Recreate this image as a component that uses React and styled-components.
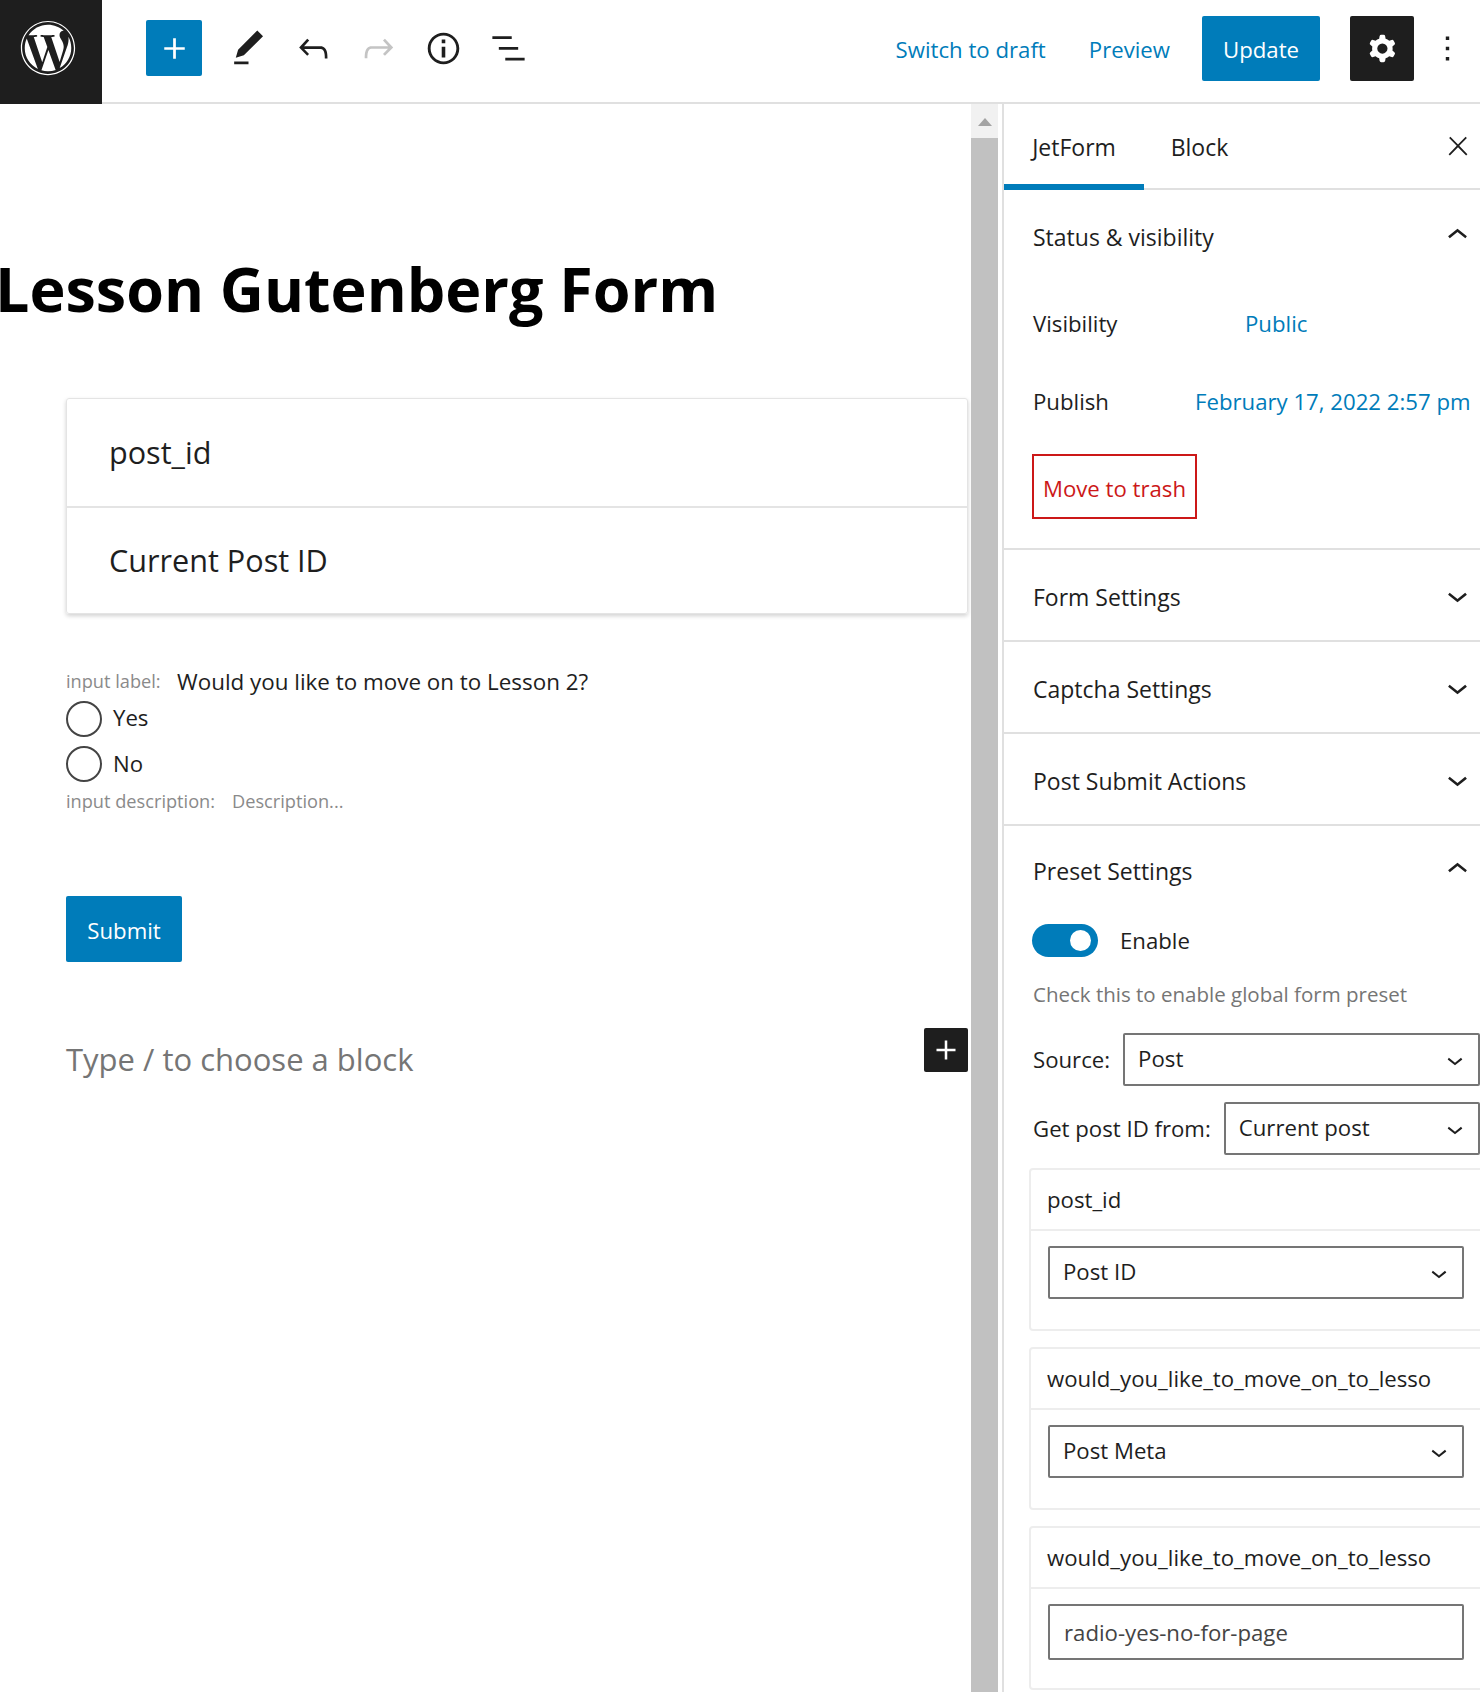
import React from 'react';
import styled, { createGlobalStyle } from 'styled-components';
import { FaWordpress } from 'react-icons/fa';

const blue = '#007cba';
const ink = '#1e1e1e';
const font = '"Open Sans", "Noto Sans", sans-serif';

const GlobalStyle = createGlobalStyle`
    html, body {
        margin: 0;
        padding: 0;
        background: #fff;
    }
    body {
        font-family: ${font};
        font-size: 22.2px;
        color: ${ink};
    }
    * {
        box-sizing: border-box;
    }
`;

const Page = styled.div`
    height: 1692px;
    width: 1480px;
    display: flex;
    flex-direction: column;
    overflow: hidden;
`;

const Header = styled.header`
    height: 104px;
    flex: none;
    display: flex;
    align-items: center;
    border-bottom: 2px solid #e0e0e0;
`;

const LogoBox = styled.div`
    width: 102px;
    height: 104px;
    align-self: flex-start;
    background: ${ink};
    color: #fff;
    display: flex;
    align-items: center;
    justify-content: center;
    padding: 0 6px 8px 0;
`;

const Tools = styled.div`
    display: flex;
    align-items: center;
    margin-left: 44px;
    margin-top: -6px;
`;

const Inserter = styled.div`
    width: 56px;
    height: 56px;
    margin-right: 14px;
    border-radius: 2px;
    background: ${blue};
    color: #fff;
    display: flex;
    align-items: center;
    justify-content: center;
`;

const ToolIcon = styled.div`
    width: 65px;
    display: flex;
    justify-content: center;
    color: ${(p) => (p.$off ? '#c4c4c4' : ink)};
`;

const HeaderRight = styled.div`
    margin-left: auto;
    margin-top: -6px;
    display: flex;
    align-items: center;
`;

const HeaderLink = styled.a`
    color: ${blue};
    padding-top: 2px;
    margin-right: ${(p) => p.$gap}px;
`;

const UpdateButton = styled.div`
    width: 118px;
    height: 65px;
    padding-top: 2px;
    border-radius: 2px;
    background: ${blue};
    color: #fff;
    display: flex;
    align-items: center;
    justify-content: center;
    margin-right: 30px;
`;

const GearButton = styled.div`
    width: 64px;
    height: 65px;
    border-radius: 2px;
    background: ${ink};
    color: #fff;
    display: flex;
    align-items: center;
    justify-content: center;
    margin-right: 13px;
`;

const Dots = styled.div`
    width: 41px;
    margin-right: 12px;
    display: flex;
`;

const Body = styled.div`
    flex: 1;
    min-height: 0;
    display: flex;
`;

const Canvas = styled.main`
    width: 971px;
    flex: none;
    padding: 145px 3px 0 66px;
    overflow: hidden;
`;

const Title = styled.h1`
    margin: 0 0 69px -71px;
    font-size: 61px;
    line-height: 80px;
    font-weight: 700;
    color: #000;
    white-space: nowrap;
`;

const FieldCard = styled.div`
    border: 1px solid #e4e4e4;
    border-radius: 3px;
    box-shadow: 0 2px 4px rgba(0, 0, 0, 0.18);
`;

const FieldRow = styled.div`
    height: ${(p) => p.$h}px;
    display: flex;
    align-items: center;
    padding: 0 0 1px 42px;
    font-size: 30.6px;
    border-top: ${(p) => (p.$divided ? '2px solid #e4e4e4' : 'none')};
`;

const LabelRow = styled.div`
    margin-top: 54px;
    height: 30px;
    padding-bottom: 4px;
    display: flex;
    align-items: center;
`;

const Hint = styled.span`
    font-size: 18.2px;
    color: #8a8a8a;
    width: ${(p) => p.$w}px;
    flex: none;
`;

const Question = styled.span`
    font-size: 22.4px;
`;

const RadioRow = styled.div`
    margin-top: ${(p) => p.$top}px;
    height: 36px;
    display: flex;
    align-items: center;
    gap: 11px;
`;

const RadioLabel = styled.span`
    padding-bottom: ${(p) => p.$lift}px;
`;

const Radio = styled.span`
    width: 36px;
    height: 36px;
    border: 2px solid #444;
    border-radius: 50%;
`;

const DescRow = styled.div`
    margin-top: 7px;
    height: 24px;
    display: flex;
    align-items: center;
`;

const SubmitButton = styled.div`
    margin-top: 83px;
    width: 116px;
    height: 66px;
    padding-top: 3px;
    border-radius: 2px;
    background: ${blue};
    color: #fff;
    display: flex;
    align-items: center;
    justify-content: center;
`;

const BlockRow = styled.div`
    margin-top: 75px;
    height: 44px;
    display: flex;
    align-items: center;
    justify-content: space-between;
    font-size: 31px;
    color: #757575;
`;

const BlockPlus = styled.div`
    width: 44px;
    height: 44px;
    margin-top: -18px;
    border-radius: 2px;
    background: ${ink};
    color: #fff;
    display: flex;
    align-items: center;
    justify-content: center;
`;

const Scrollbar = styled.div`
    width: 31px;
    flex: none;
    display: flex;
    border-right: 4px solid #fff;
    flex-direction: column;
    align-items: center;
    background: #f1f1f1;
`;

const ScrollUp = styled.div`
    height: 34px;
    flex: none;
    padding-top: 14px;
    &::before {
        content: '';
        display: block;
        border: 7px solid transparent;
        border-top: 0;
        border-bottom: 8px solid #a3a3a3;
    }
`;

const ScrollThumb = styled.div`
    flex: 1;
    width: 27px;
    background: #c1c1c1;
`;

const Sidebar = styled.aside`
    width: 478px;
    flex: none;
    border-left: 2px solid #e0e0e0;
    overflow: hidden;
`;

const TabBar = styled.div`
    height: 86px;
    display: flex;
    border-bottom: 2px solid #e0e0e0;
`;

const Tab = styled.div`
    height: 86px;
    width: ${(p) => p.$w}px;
    font-size: 23px;
    display: flex;
    align-items: center;
    justify-content: center;
    box-shadow: ${(p) => (p.$active ? `inset 0 -6px 0 ${blue}` : 'none')};
`;

const CloseIcon = styled.div`
    margin-left: auto;
    margin-right: 7px;
    align-self: center;
    display: flex;
`;

const Panel = styled.section`
    border-bottom: ${(p) => (p.$last ? 'none' : '2px solid #e0e0e0')};
    padding: 0 0 ${(p) => p.$bottom || 0}px 29px;
`;

const PanelHead = styled.div`
    height: ${(p) => p.$h}px;
    padding-top: ${(p) => p.$pad || 0}px;
    display: flex;
    align-items: center;
    justify-content: space-between;
    padding-right: 2px;
    font-size: 23px;
    svg {
        margin-top: -3px;
    }
`;

const MetaRow = styled.div`
    height: 78px;
    display: flex;
    align-items: center;
`;

const MetaLabel = styled.span`
    width: ${(p) => p.$w}px;
    flex: none;
`;

const MetaValue = styled.span`
    color: ${blue};
    white-space: nowrap;
`;

const TrashButton = styled.div`
    margin: 14px 0 0 -1px;
    width: 165px;
    height: 65px;
    padding-top: 3px;
    border: 2px solid #cc1818;
    color: #cc1818;
    display: flex;
    align-items: center;
    justify-content: center;
`;

const ToggleRow = styled.div`
    margin: 8px 0 0 -1px;
    height: 33px;
    display: flex;
    align-items: center;
    gap: 22px;
`;

const Toggle = styled.span`
    width: 66px;
    height: 33px;
    border-radius: 17px;
    background: ${blue};
    display: flex;
    align-items: center;
    justify-content: flex-end;
    padding-right: 7px;
    &::after {
        content: '';
        width: 21px;
        height: 21px;
        border-radius: 50%;
        background: #fff;
    }
`;

const HelpText = styled.div`
    margin-top: 22px;
    height: 30px;
    font-size: 20.5px;
    line-height: 30px;
    color: #757575;
`;

const SelectRow = styled.div`
    margin-top: ${(p) => p.$top}px;
    display: flex;
    align-items: center;
    gap: 13px;
`;

const Select = styled.div`
    height: 53px;
    flex: 1;
    min-width: 0;
    border: 2px solid #757575;
    border-radius: 2px;
    display: flex;
    align-items: center;
    justify-content: space-between;
    padding: 0 7px 3px 13px;
    white-space: nowrap;
    overflow: hidden;
`;

const SelectChevron = styled.span`
    display: flex;
    padding-top: 3px;
`;

const PresetBox = styled.div`
    margin: ${(p) => p.$top}px 0 0 -4px;
    width: 455px;
    border: 2px solid #ededed;
    border-radius: 4px;
`;

const BoxTitle = styled.div`
    height: 61px;
    display: flex;
    align-items: center;
    padding-left: 16px;
    white-space: nowrap;
    border-bottom: 2px solid #ededed;
`;

const BoxBody = styled.div`
    padding: 15px 18px ${(p) => p.$bottom}px 17px;
`;

const TextField = styled.div`
    height: 56px;
    border: 2px solid #757575;
    border-radius: 2px;
    display: flex;
    align-items: center;
    padding-left: 14px;
    color: #444;
`;

const Icon = ({ d, size = 41, fillRule }) => (
    <svg width={size} height={size} viewBox="0 0 24 24" fill="currentColor">
        <path d={d} fillRule={fillRule} clipRule={fillRule} />
    </svg>
);

const paths = {
    plus: 'M18 11.2h-5.2V6h-1.6v5.2H6v1.6h5.2V18h1.6v-5.2H18z',
    pencil: 'M20.1 5.1L16.9 2 6.2 12.7l-1.3 4.4 4.5-1.3L20.1 5.1zM4 20.8h8v-1.5H4v1.5z',
    undo: 'M18.3 11.7c-.6-.6-1.4-.9-2.3-.9H6.7l2.9-3.3-1.1-1-4.5 5L8.5 16l1-1-2.7-2.7H16c.5 0 .9.2 1.3.5 1 1 1 3.4 1 4.5v.3h1.5v-.2c0-1.5 0-4.3-1.5-5.7z',
    redo: 'M15.6 6.5l-1.1 1 2.9 3.3H8c-.9 0-1.7.3-2.3.9-1.4 1.5-1.4 4.2-1.4 5.6v.2h1.5v-.3c0-1.1 0-3.5 1-4.5.3-.3.7-.5 1.3-.5h9.2L14.5 15l1.1 1.1 4.6-4.6-4.6-5z',
    info: 'M12 3.2c-4.8 0-8.8 3.9-8.8 8.8 0 4.8 3.9 8.8 8.8 8.8 4.8 0 8.8-3.9 8.8-8.8 0-4.8-4-8.8-8.8-8.8zm0 16c-4 0-7.2-3.3-7.2-7.2C4.8 8 8 4.8 12 4.8s7.2 3.3 7.2 7.2c0 4-3.2 7.2-7.2 7.2zM11 17h2v-6h-2v6zm0-8h2V7h-2v2z',
    list: 'M13.8 5.2H3v1.5h10.8V5.2zm-3.6 12v1.5H21v-1.5H10.2zm7.2-6H6.6v1.5h10.8v-1.5z',
    gear: 'M10.289 4.836A1 1 0 0111.275 4h1.306a1 1 0 01.987.836l.244 1.466c.787.26 1.503.679 2.108 1.218l1.393-.522a1 1 0 011.216.437l.653 1.13a1 1 0 01-.23 1.273l-1.148.944a6.025 6.025 0 010 2.435l1.149.946a1 1 0 01.23 1.272l-.653 1.13a1 1 0 01-1.216.437l-1.394-.522c-.605.54-1.32.958-2.108 1.218l-.244 1.466a1 1 0 01-.987.836h-1.306a1 1 0 01-.986-.836l-.244-1.466a5.995 5.995 0 01-2.108-1.218l-1.394.522a1 1 0 01-1.217-.436l-.653-1.131a1 1 0 01.23-1.272l1.149-.946a6.026 6.026 0 010-2.435l-1.148-.944a1 1 0 01-.23-1.272l.653-1.131a1 1 0 011.217-.437l1.393.522a5.994 5.994 0 012.108-1.218l.244-1.466zM14.929 12a3 3 0 11-6 0 3 3 0 016 0z',
    dots: 'M13 19h-2v-2h2v2zm0-6h-2v-2h2v2zm0-6h-2V5h2v2z',
    close: 'M13 11.8l6.1-6.3-1-1-6.1 6.2-6.1-6.2-1 1 6.1 6.3-6.5 6.7 1 1 6.5-6.6 6.5 6.6 1-1z',
    up: 'M6.5 12.4L12 8l5.5 4.4-.9 1.2L12 10l-4.5 3.6-1-1.2z',
    down: 'M17.5 11.6L12 16l-5.5-4.4.9-1.2L12 14l4.5-3.6 1 1.2z',
};

const Dropdown = ({ children }) => (
    <Select>
        {children}
        <SelectChevron><Icon d={paths.down} size={32} /></SelectChevron>
    </Select>
);

const ClosedPanel = ({ title }) => (
    <Panel>
        <PanelHead $h={90} $pad={4}>
            {title}
            <Icon d={paths.down} />
        </PanelHead>
    </Panel>
);

function App() {
    return (
        <Page>
            <GlobalStyle />
            <Header>
                <LogoBox><FaWordpress size={56} /></LogoBox>
                <Tools>
                    <Inserter><Icon d={paths.plus} /></Inserter>
                    <ToolIcon><Icon d={paths.pencil} size={43} /></ToolIcon>
                    <ToolIcon><Icon d={paths.undo} size={43} /></ToolIcon>
                    <ToolIcon $off><Icon d={paths.redo} size={43} /></ToolIcon>
                    <ToolIcon><Icon d={paths.info} size={43} /></ToolIcon>
                    <ToolIcon><Icon d={paths.list} size={43} /></ToolIcon>
                </Tools>
                <HeaderRight>
                    <HeaderLink $gap={43}>Switch to draft</HeaderLink>
                    <HeaderLink $gap={32}>Preview</HeaderLink>
                    <UpdateButton>Update</UpdateButton>
                    <GearButton><Icon d={paths.gear} fillRule="evenodd" /></GearButton>
                    <Dots><Icon d={paths.dots} /></Dots>
                </HeaderRight>
            </Header>
            <Body>
                <Canvas>
                    <Title>Lesson Gutenberg Form</Title>
                    <FieldCard>
                        <FieldRow $h={107}>post_id</FieldRow>
                        <FieldRow $h={107} $divided>Current Post ID</FieldRow>
                    </FieldCard>
                    <LabelRow>
                        <Hint $w={111}>input label:</Hint>
                        <Question>Would you like to move on to Lesson 2?</Question>
                    </LabelRow>
                    <RadioRow $top={3}><Radio /><RadioLabel $lift={4}>Yes</RadioLabel></RadioRow>
                    <RadioRow $top={9}><Radio /><RadioLabel $lift={2}>No</RadioLabel></RadioRow>
                    <DescRow>
                        <Hint $w={166}>input description:</Hint>
                        <Hint>Description...</Hint>
                    </DescRow>
                    <SubmitButton>Submit</SubmitButton>
                    <BlockRow>
                        Type / to choose a block
                        <BlockPlus><Icon d={paths.plus} size={38} /></BlockPlus>
                    </BlockRow>
                </Canvas>
                <Scrollbar>
                    <ScrollUp />
                    <ScrollThumb />
                </Scrollbar>
                <Sidebar>
                    <TabBar>
                        <Tab $w={140} $active>JetForm</Tab>
                        <Tab $w={111}>Block</Tab>
                        <CloseIcon><Icon d={paths.close} size={30} /></CloseIcon>
                    </TabBar>
                    <Panel $bottom={29}>
                        <PanelHead $h={94}>
                            Status &amp; visibility
                            <Icon d={paths.up} />
                        </PanelHead>
                        <MetaRow>
                            <MetaLabel $w={212}>Visibility</MetaLabel>
                            <MetaValue>Public</MetaValue>
                        </MetaRow>
                        <MetaRow>
                            <MetaLabel $w={162}>Publish</MetaLabel>
                            <MetaValue>February 17, 2022 2:57 pm</MetaValue>
                        </MetaRow>
                        <TrashButton>Move to trash</TrashButton>
                    </Panel>
                    <ClosedPanel title="Form Settings" />
                    <ClosedPanel title="Captcha Settings" />
                    <ClosedPanel title="Post Submit Actions" />
                    <Panel $last>
                        <PanelHead $h={90}>
                            Preset Settings
                            <Icon d={paths.up} />
                        </PanelHead>
                        <ToggleRow><Toggle />Enable</ToggleRow>
                        <HelpText>Check this to enable global form preset</HelpText>
                        <SelectRow $top={24}>
                            Source:
                            <Dropdown>Post</Dropdown>
                        </SelectRow>
                        <SelectRow $top={16}>
                            Get post ID from:
                            <Dropdown>Current post</Dropdown>
                        </SelectRow>
                        <PresetBox $top={13}>
                            <BoxTitle>post_id</BoxTitle>
                            <BoxBody $bottom={30}><Dropdown>Post ID</Dropdown></BoxBody>
                        </PresetBox>
                        <PresetBox $top={16}>
                            <BoxTitle>would_you_like_to_move_on_to_lesso</BoxTitle>
                            <BoxBody $bottom={30}><Dropdown>Post Meta</Dropdown></BoxBody>
                        </PresetBox>
                        <PresetBox $top={16}>
                            <BoxTitle>would_you_like_to_move_on_to_lesso</BoxTitle>
                            <BoxBody $bottom={28}><TextField>radio-yes-no-for-page</TextField></BoxBody>
                        </PresetBox>
                    </Panel>
                </Sidebar>
            </Body>
        </Page>
    );
}

export default App;
